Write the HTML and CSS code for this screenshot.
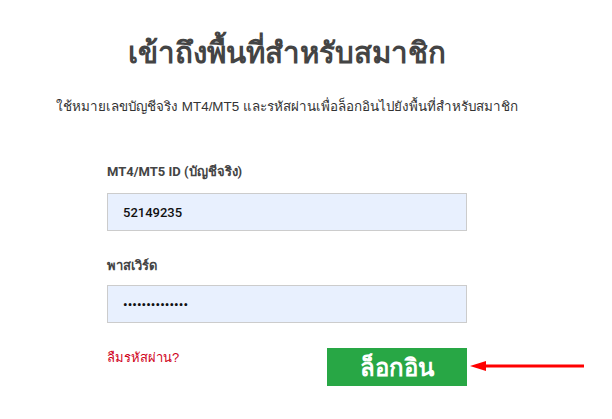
FILE: index.html
```html
<!DOCTYPE html>
<html lang="th">
<head>
<meta charset="utf-8">
<link rel="stylesheet" href="styles.css">
</head>
<body>
<main class="page">
  <h1 class="title">เข้าถึงพื้นที่สำหรับสมาชิก</h1>
  <p class="intro">ใช้หมายเลขบัญชีจริง MT4/MT5 และรหัสผ่านเพื่อล็อกอินไปยังพื้นที่สำหรับสมาชิก</p>
  <form class="form">
    <label class="label">MT4/MT5 ID (บัญชีจริง)</label>
    <div class="field">52149235</div>
    <label class="label label-pass">พาสเวิร์ด</label>
    <div class="field field-pass">••••••••••••••</div>
    <div class="actions">
      <a class="forgot">ลืมรหัสผ่าน?</a>
      <div class="btn-wrap">
        <button type="button" class="btn">ล็อกอิน</button>
        <svg class="arrow" width="120" height="12" viewBox="0 0 120 12">
          <polygon points="0,6 16,1 16,11" fill="#f00"/>
          <rect x="12" y="4.5" width="102" height="3" fill="#f00"/>
        </svg>
      </div>
    </div>
  </form>
</main>
</body>
</html>
```
FILE: styles.css
```css
* { box-sizing: border-box; }
html, body { margin: 0; padding: 0; background: #fff; }
body { font-family: "Liberation Sans", Arial, "Noto Sans", sans-serif; }
.page {
  width: 574px;
  display: flex;
  flex-direction: column;
  align-items: center;
}
.title {
  margin: 33px 0 0;
  font-size: 29.5px;
  font-weight: bold;
  color: #444;
  line-height: 40px;
}
.intro {
  margin: 25px 0 0;
  font-size: 13.4px;
  color: #333;
  line-height: 18px;
}
.form {
  width: 360px;
  margin-top: 47px;
  display: flex;
  flex-direction: column;
}
.label {
  font-family: Roboto, "Liberation Sans", sans-serif;
  font-weight: bold;
  font-size: 13px;
  color: #444;
  line-height: 18px;
}
.label-pass { margin-top: 26px; }
.field {
  margin-top: 12px;
  height: 38px;
  background: #e8f0fe;
  border: 1px solid #ccc;
  padding: 0 15px;
  display: flex;
  align-items: center;
  font-family: Roboto, "Liberation Sans", sans-serif;
  font-size: 13px;
  font-weight: 500;
  color: #111;
}
.field-pass { margin-top: 10px; letter-spacing: 0.1px; font-size: 13px; }
.actions {
  margin-top: 25px;
  display: flex;
  justify-content: space-between;
  align-items: flex-start;
}
.forgot {
  font-size: 13px;
  color: #d0021b;
  margin-top: 1px;
  line-height: 18px;
}
.btn-wrap { position: relative; }
.btn {
  width: 140px;
  height: 38px;
  border: 0;
  background: #28a745;
  color: #fff;
  font-family: "Liberation Sans", Arial, sans-serif;
  font-weight: bold;
  font-size: 24px;
  display: flex;
  align-items: center;
  justify-content: center;
  padding: 0;
}
.arrow {
  position: absolute;
  left: 143px;
  top: 12px;
}
```
